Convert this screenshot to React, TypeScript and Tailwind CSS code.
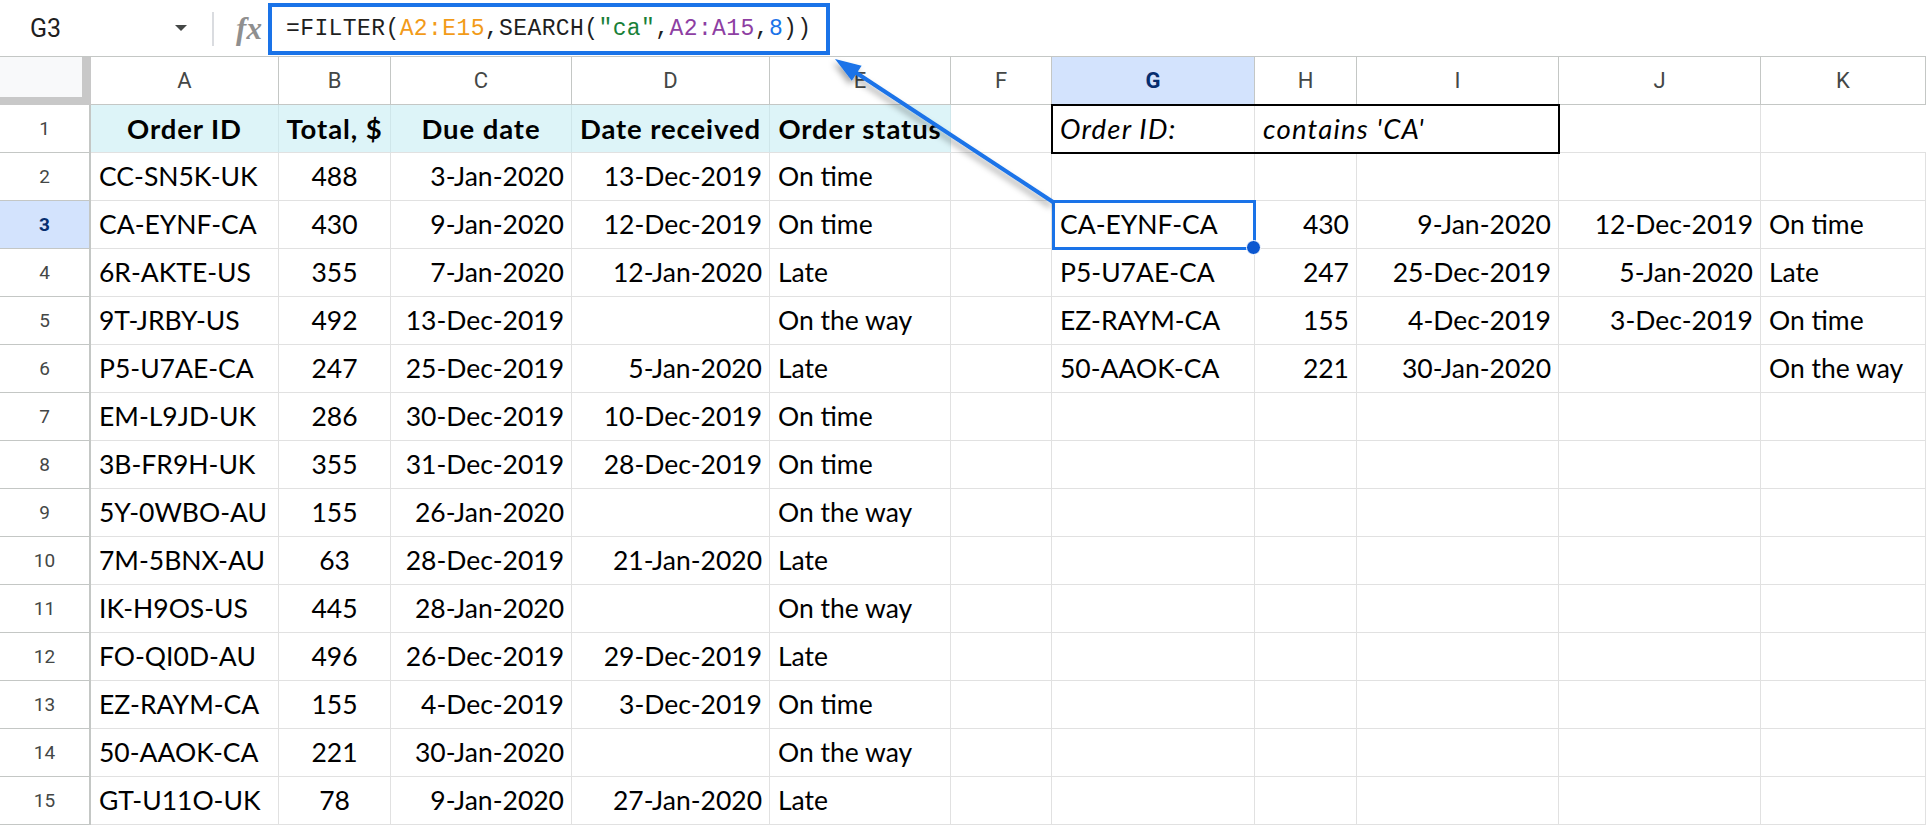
import React from 'react';

type Align = 'l' | 'c' | 'r';

const COLUMNS = ['A', 'B', 'C', 'D', 'E', 'F', 'G', 'H', 'I', 'J', 'K'];

// source table A2:E15
const ORDERS: string[][] = [
  ['CC-SN5K-UK', '488', '3-Jan-2020', '13-Dec-2019', 'On time'],
  ['CA-EYNF-CA', '430', '9-Jan-2020', '12-Dec-2019', 'On time'],
  ['6R-AKTE-US', '355', '7-Jan-2020', '12-Jan-2020', 'Late'],
  ['9T-JRBY-US', '492', '13-Dec-2019', '', 'On the way'],
  ['P5-U7AE-CA', '247', '25-Dec-2019', '5-Jan-2020', 'Late'],
  ['EM-L9JD-UK', '286', '30-Dec-2019', '10-Dec-2019', 'On time'],
  ['3B-FR9H-UK', '355', '31-Dec-2019', '28-Dec-2019', 'On time'],
  ['5Y-0WBO-AU', '155', '26-Jan-2020', '', 'On the way'],
  ['7M-5BNX-AU', '63', '28-Dec-2019', '21-Jan-2020', 'Late'],
  ['IK-H9OS-US', '445', '28-Jan-2020', '', 'On the way'],
  ['FO-QI0D-AU', '496', '26-Dec-2019', '29-Dec-2019', 'Late'],
  ['EZ-RAYM-CA', '155', '4-Dec-2019', '3-Dec-2019', 'On time'],
  ['50-AAOK-CA', '221', '30-Jan-2020', '', 'On the way'],
  ['GT-U11O-UK', '78', '9-Jan-2020', '27-Jan-2020', 'Late'],
];

// FILTER output spilled into G3:K6
const RESULTS: string[][] = [
  ['CA-EYNF-CA', '430', '9-Jan-2020', '12-Dec-2019', 'On time'],
  ['P5-U7AE-CA', '247', '25-Dec-2019', '5-Jan-2020', 'Late'],
  ['EZ-RAYM-CA', '155', '4-Dec-2019', '3-Dec-2019', 'On time'],
  ['50-AAOK-CA', '221', '30-Jan-2020', '', 'On the way'],
];

const HEADERS = ['Order ID', 'Total, $', 'Due date', 'Date received', 'Order status'];
const SOURCE_ALIGN: Align[] = ['l', 'c', 'r', 'r', 'l'];
const RESULT_ALIGN: Align[] = ['l', 'r', 'r', 'r', 'l'];

const gridCols =
  'grid grid-cols-[91px_188px_112px_181px_198px_181px_101px_203px_102px_202px_202px_1fr]';

const alignClass: Record<Align, string> = {
  l: 'justify-start pl-2',
  c: 'justify-center',
  r: 'justify-end pr-[7px]',
};

const Cell = ({
  text = '',
  align = 'l',
  className = '',
}: {
  text?: string;
  align?: Align;
  className?: string;
}) => (
  <div
    className={`flex h-[48px] items-center whitespace-nowrap border-b border-[#e1e1e1] pt-[1px] text-black ${alignClass[align]} ${className}`}
  >
    {text}
  </div>
);

const Toolbar = () => (
  <div className="flex h-[57px] items-start border-b border-[#c4c7c5] bg-white">
    <div className="flex h-[56px] w-[212px] items-center justify-between pl-[30px] pr-[25px]">
      <span className="font-['Roboto',sans-serif] text-[25px] leading-none text-[#1f1f1f]">G3</span>
      <svg width="12" height="6" viewBox="0 0 12 6">
        <path d="M0 0h12L6 6z" fill="#444746" />
      </svg>
    </div>
    <div className="mt-[12px] h-[34px] w-[2px] bg-[#dadce0]" />
    <div className="ml-[21px] flex h-[56px] w-[28px] items-center justify-center">
      <span className="font-['Liberation_Serif',serif] text-[31px] font-bold italic leading-none text-[#8f8f8f]">
        fx
      </span>
    </div>
    <div className="ml-[5px] mt-[3px] flex h-[52px] w-[562px] shrink-0 items-center overflow-hidden border-4 border-[#1a73e8] pl-[14px]">
      <span className="font-['Liberation_Mono',monospace] text-[23px] tracking-[0.4px] whitespace-nowrap text-[#1f1f1f]">
        =FILTER(<span className="text-[#f29b19]">A2:E15</span>,SEARCH(
        <span className="text-[#188038]">"ca"</span>,
        <span className="text-[#8e3fa3]">A2:A15</span>,
        <span className="text-[#1a73e8]">8</span>))
      </span>
    </div>
  </div>
);

const ColumnHeaders = () => (
  <div className={`${gridCols} h-[48px]`}>
    <div className="border-b-[8px] border-r-[9px] border-[#c8c8c8] bg-[#f8f9fa]" />
    {COLUMNS.map((c) => (
      <div
        key={c}
        className={`flex items-center justify-center border-b border-r border-[#c4c7c5] font-['Roboto',sans-serif] ${
          c === 'G' ? 'bg-[#d3e3fd] font-bold text-[#062e6f]' : 'text-[#444746]'
        }`}
      >
        <span className="text-[22px] leading-none">{c}</span>
      </div>
    ))}
  </div>
);

const Row = ({ n }: { n: number }) => {
  const selected = n === 3;
  const src = n >= 2 ? ORDERS[n - 2] : null;
  const res = n >= 3 && n <= 6 ? RESULTS[n - 3] : null;
  const text = 'text-[26.5px]';

  return (
    <div className={`${gridCols} h-[48px]`}>
      <div
        className={`flex items-center justify-center border-b border-r-2 border-[#c4c7c5] font-['Roboto',sans-serif] ${
          selected ? 'bg-[#d3e3fd] font-bold text-[#062e6f]' : 'text-[#444746]'
        }`}
      >
        <span className="text-[19px] leading-none">{n}</span>
      </div>

      {n === 1
        ? HEADERS.map((h) => (
            <Cell
              key={h}
              text={h}
              align="c"
              className="border-r border-r-[#cfe6ea] bg-[#ddf4f8] text-[27.5px] font-bold tracking-[0.9px]"
            />
          ))
        : src!.map((v, i) => (
            <Cell
              key={i}
              text={v}
              align={SOURCE_ALIGN[i]}
              className={`border-r border-r-[#e1e1e1] ${text}`}
            />
          ))}

      <Cell className="border-r border-r-[#e1e1e1]" />

      {n === 1 ? (
        <>
          <Cell
            text="Order ID:"
            className="border-r border-r-[#e1e1e1] text-[27.5px] italic tracking-[1.2px]"
          />
          <Cell text="contains 'CA'" className="text-[27.5px] italic tracking-[1.2px]" />
          <Cell className="border-r border-r-[#e1e1e1]" />
          <Cell className="border-r border-r-[#e1e1e1]" />
          <Cell />
        </>
      ) : res ? (
        res.map((v, i) => (
          <Cell
            key={i}
            text={v}
            align={RESULT_ALIGN[i]}
            className={`border-r border-r-[#e1e1e1] ${text}`}
          />
        ))
      ) : (
        [0, 1, 2, 3, 4].map((i) => <Cell key={i} className="border-r border-r-[#e1e1e1]" />)
      )}
    </div>
  );
};

const Arrow = () => (
  <svg className="pointer-events-none absolute left-0 top-0" width="1926" height="826">
    <defs>
      <filter id="arrowShadow" x="-20%" y="-20%" width="140%" height="140%">
        <feDropShadow dx="-2" dy="4" stdDeviation="3" floodColor="#000" floodOpacity="0.35" />
      </filter>
    </defs>
    <g filter="url(#arrowShadow)">
      <line x1="1053" y1="202" x2="852" y2="70" stroke="#1a73e8" strokeWidth="4" />
      <polygon points="835,59 851.8,80.8 861.6,65.8" fill="#1a73e8" />
    </g>
  </svg>
);

export default function App() {
  return (
    <div className="relative h-[826px] w-[1926px] overflow-hidden bg-white font-[Lato,sans-serif]">
      <Toolbar />
      <ColumnHeaders />
      {Array.from({ length: 15 }, (_, i) => (
        <Row key={i} n={i + 1} />
      ))}

      {/* criteria box G1:I1 */}
      <div className="pointer-events-none absolute left-[1051px] top-[104px] h-[50px] w-[509px] border-2 border-black" />

      {/* active cell G3 */}
      <div className="pointer-events-none absolute left-[1052px] top-[200px] h-[50px] w-[204px] border-[3px] border-[#1a73e8]">
        <div className="absolute -bottom-[8px] -right-[8px] h-[15px] w-[15px] rounded-full border border-white bg-[#0b57d0]" />
      </div>

      <Arrow />
    </div>
  );
}
